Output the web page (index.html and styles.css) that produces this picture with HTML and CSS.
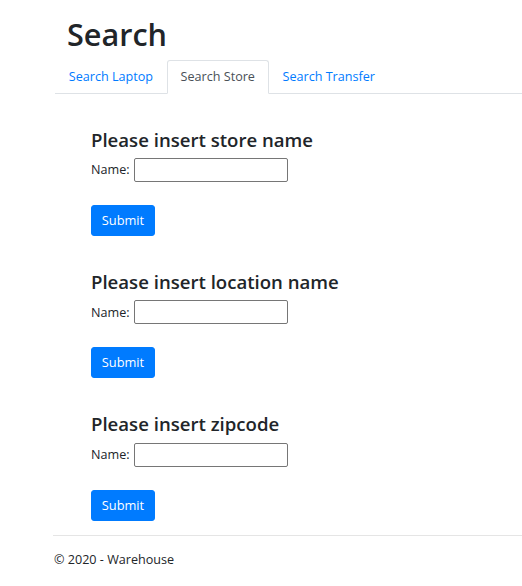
FILE: index.html
```html
<!DOCTYPE html>
<html lang="en">
<head>
<meta charset="utf-8">
<title>Search</title>
<link rel="stylesheet" href="styles.css">
</head>
<body>
<div class="page">
  <h1 class="title">Search</h1>
  <ul class="tabs">
    <li><a class="tab" href="#">Search Laptop</a></li>
    <li><a class="tab active" href="#">Search Store</a></li>
    <li><a class="tab" href="#">Search Transfer</a></li>
  </ul>
  <main class="content">
    <section class="block">
      <h4 class="block-title">Please insert store name</h4>
      <div class="field"><label class="label">Name:</label> <input class="input" type="text"></div>
      <button class="btn" type="button">Submit</button>
    </section>
    <section class="block">
      <h4 class="block-title">Please insert location name</h4>
      <div class="field"><label class="label">Name:</label> <input class="input" type="text"></div>
      <button class="btn" type="button">Submit</button>
    </section>
    <section class="block">
      <h4 class="block-title">Please insert zipcode</h4>
      <div class="field"><label class="label">Name:</label> <input class="input" type="text"></div>
      <button class="btn" type="button">Submit</button>
    </section>
  </main>
  <footer class="footer">© 2020 - Warehouse</footer>
</div>
</body>
</html>
```
FILE: styles.css
```css
* { box-sizing: border-box; }
html, body { margin: 0; padding: 0; background: #fff; }
body {
  font-family: "Open Sans", "Noto Sans", sans-serif;
  font-size: 12.6px;
  line-height: 1.5;
  color: #212529;
}
.page { padding-left: 53px; }
.title {
  margin: 16px 0 7px 14px;
  font-size: 30.6px;
  font-weight: 600;
  line-height: 1.2;
}
.tabs {
  display: flex;
  list-style: none;
  margin: 0 0 0 2px;
  padding: 0;
  border-bottom: 1px solid #dee2e6;
}
.tabs li { margin-bottom: -1px; }
.tab {
  display: block;
  padding: 6.4px 12.8px;
  border: 1px solid transparent;
  border-radius: 3px 3px 0 0;
  color: #007bff;
  text-decoration: none;
  font-size: 12.6px;
  line-height: 19.2px;
}
.tab.active {
  color: #495057;
  background: #fff;
  border-color: #dee2e6 #dee2e6 #fff;
}
.content { padding-left: 38px; }
.block { padding-top: 35px; }
.block-title {
  margin: 0 0 7px;
  font-size: 18.6px;
  font-weight: 600;
  line-height: 1.2;
}
.field { display: flex; align-items: center; gap: 4px; height: 24px; }
.label { line-height: 19.2px; }
.input {
  width: 154px;
  height: 24px;
  border: 1px solid #767676;
  border-radius: 2px;
  padding: 1px 2px;
  font: inherit;
}
.btn {
  display: block;
  margin-top: 23px;
  width: 64px;
  height: 31px;
  padding: 0;
  border: 1px solid #007bff;
  border-radius: 3px;
  background: #007bff;
  color: #fff;
  font: inherit;
  font-size: 12.8px;
}
.footer {
  margin-top: 14px;
  border-top: 1px solid #e5e5e5;
  padding-top: 14px;
  padding-left: 1px;
  line-height: 19.2px;
}
```
